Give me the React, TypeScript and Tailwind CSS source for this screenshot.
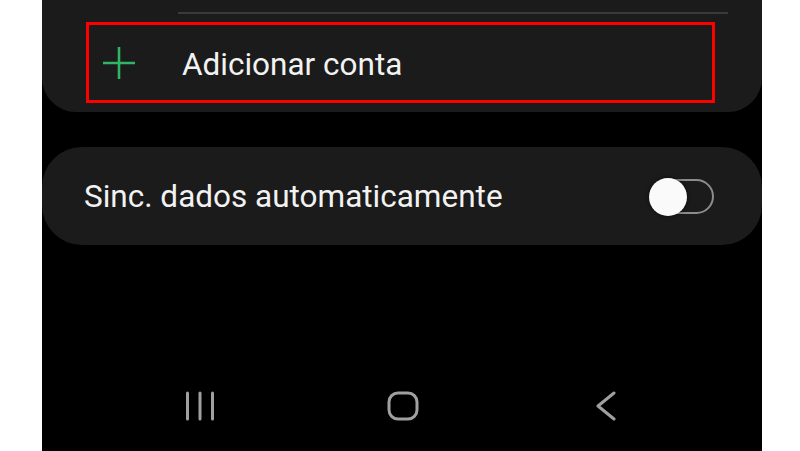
export default function App() {
  return (
    <div className="flex h-[451px] w-[800px] bg-white font-['Roboto',sans-serif]">
      <div className="ml-[42px] flex w-[720px] flex-col bg-black">
        <div className="h-[112px] rounded-b-[34px] bg-[#1b1b1b] pt-3">
          <div className="ml-[136px] mr-[34px] h-[2px] bg-[#3a3a3a]" />
          <div className="ml-[44px] mr-[47px] mt-[8px] flex h-[81px] items-center border-[3px] border-[#ff0000]">
            <svg width="34" height="34" viewBox="0 0 34 34" className="ml-[13px] text-[#2fb563]">
              <path d="M17 1v32M1 17h32" stroke="currentColor" strokeWidth="2.6" />
            </svg>
            <span className="ml-[46px] pt-[4px] text-[31.5px] leading-none text-[#f2f2f2]">Adicionar conta</span>
          </div>
        </div>

        <div className="mt-[35px] flex h-[98px] items-center justify-between rounded-[40px] bg-[#1b1b1b] pl-[42px] pr-[48px]">
          <span className="pt-[2px] text-[31.5px] leading-none text-[#f2f2f2]">Sinc. dados automaticamente</span>
          <div className="relative h-[35px] w-[62px] rounded-full border-2 border-[#8c8c8c]">
            <div className="absolute -left-[5px] -top-[3px] size-[38px] rounded-full bg-[#fafafa] shadow-[0_0_4px_rgba(0,0,0,0.6)]" />
          </div>
        </div>

        <div className="mt-auto flex h-[86px] items-center gap-[169px] pb-[4px] pl-[141px]">
          <svg width="34" height="30" viewBox="0 0 34 30" className="text-[#a0a0a0]">
            <path d="M4.5 2v26M17 2v26M29.5 2v26" stroke="currentColor" strokeWidth="3" strokeLinecap="round" />
          </svg>
          <svg width="34" height="30" viewBox="0 0 34 30" className="text-[#a0a0a0]">
            <rect x="3" y="2" width="28" height="26" rx="9" fill="none" stroke="currentColor" strokeWidth="3" />
          </svg>
          <svg width="34" height="30" viewBox="0 0 34 30" className="text-[#a0a0a0]">
            <path d="M25 2 L9 15 L25 28" fill="none" stroke="currentColor" strokeWidth="3" strokeLinecap="round" strokeLinejoin="round" />
          </svg>
        </div>
      </div>
    </div>
  );
}
